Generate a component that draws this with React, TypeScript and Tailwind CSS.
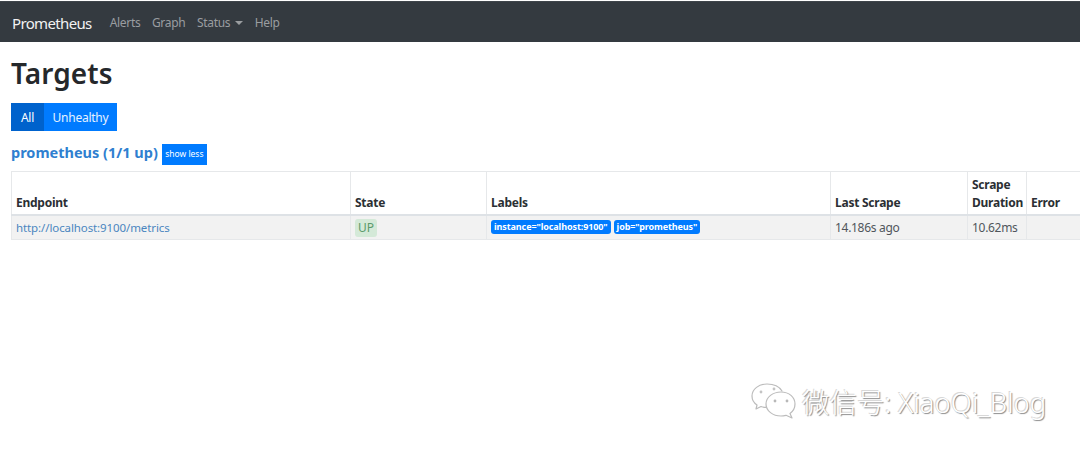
const th = "border border-[#e6e8ea] border-b-2 border-b-[#dee2e6] align-bottom text-left px-[4px] pb-[2px] font-bold text-[12px] tracking-[-0.25px] leading-[18px] text-[#2b2f33]";
const td = "border border-[#e6e8ea] align-middle px-[4px] text-[12px] tracking-[-0.3px] text-[#50565c]";

function Badge({ children }: { children: string }) {
  return (
    <span className="inline-block bg-[#007bff] rounded-[3px] px-[3px] text-white font-bold text-[9px] tracking-[-0.1px] leading-[14px] whitespace-nowrap">
      {children}
    </span>
  );
}

function WeChat() {
  return (
    <svg width="46" height="40" viewBox="0 0 46 40" fill="none" className="block">
      <g stroke="#bcbcbc" strokeWidth="1.2" strokeLinejoin="round" strokeLinecap="round">
        <path d="M31 8C28 3 22 1 16 1 8 1 1 6 1 13c0 4 2 7 5 9l-1 4 5-2.5c2 .6 3 .9 5 .9" fill="#fff" />
        <path d="M30 9c-8 0-15 5-15 12s7 12 15 12c2 0 3-.2 5-.7l6 2.7-2-4.500c3-2.200 5-5.500 5-9.500 0-7-6-12-14-12z" fill="#fff" />
      </g>
      <circle cx="10" cy="9" r="1.400" fill="#c4c4c4" />
      <circle cx="23" cy="6" r="1.400" fill="#c4c4c4" />
      <circle cx="24" cy="18" r="1.400" fill="#b8b8b8" />
      <circle cx="36" cy="18" r="1.400" fill="#b8b8b8" />
    </svg>
  );
}

export default function App() {
  return (
    <div className="relative w-[1080px] h-[453px] overflow-hidden bg-white font-['Noto_Sans','Open_Sans',sans-serif] text-[#212529]">
      <nav className="mt-px h-[41px] bg-[#343a40] border-t border-t-[#3f454b] flex items-center pl-[12px] pt-[2px]">
        <span className="text-[#f2f2f2] text-[15px] tracking-[-0.65px] mr-[18px]">Prometheus</span>
        <div className="flex items-center gap-[11.5px] text-[12px] tracking-[-0.3px] text-[#9a9da0]">
          <span>Alerts</span>
          <span>Graph</span>
          <span className="flex items-center gap-[5px]">
            Status
            <span className="w-0 h-0 border-x-[4px] border-x-transparent border-t-[4px] border-t-[#9a9da0]" />
          </span>
          <span>Help</span>
        </div>
      </nav>

      <main className="pl-[11px]">
        <h1 className="mt-[10px] text-[28px] leading-[42px] font-semibold tracking-[0.1px] text-[#25282b]">Targets</h1>
        <div className="mt-[9px] flex w-fit h-[28px] text-[12px] tracking-[-0.25px] text-white">
          <span className="w-[33px] bg-[#0062cc] flex items-center justify-center pt-[2px]">All</span>
          <span className="w-[73px] bg-[#007bff] flex items-center justify-center pt-[2px] text-[#e6f2ff]">Unhealthy</span>
        </div>
        <div className="mt-[13px] h-[21px] flex items-center gap-[4px]">
          <span className="text-[#2f7fd0] font-bold text-[14.5px] mb-[3px]">prometheus (1/1 up)</span>
          <span className="w-[45px] h-[21px] bg-[#007bff] text-white text-[8.5px] flex items-center justify-center">show less</span>
        </div>
        <table className="mt-[6px] table-fixed border-collapse w-[1100px]">
          <colgroup>
            <col className="w-[339px]" />
            <col className="w-[136px]" />
            <col className="w-[344px]" />
            <col className="w-[137px]" />
            <col className="w-[59px]" />
            <col className="w-[85px]" />
          </colgroup>
          <thead>
            <tr className="h-[43px]">
              <th className={th}>Endpoint</th>
              <th className={th}>State</th>
              <th className={th}>Labels</th>
              <th className={th}>Last Scrape</th>
              <th className={th}>Scrape Duration</th>
              <th className={th}>Error</th>
            </tr>
          </thead>
          <tbody>
            <tr className="h-[25px] bg-[#f2f2f2]">
              <td className={td}><span className="text-[#4a86c0] text-[11.5px] tracking-[-0.1px] relative top-px">http://localhost:9100/metrics</span></td>
              <td className={td}>
                <span className="inline-block bg-[#d4e9d8] rounded-[3px] px-[3px] text-[#5b9a6b] tracking-normal leading-[18px] relative top-px">UP</span>
              </td>
              <td className={td}>
                <span className="flex items-center gap-[3px] tracking-normal">
                  <Badge>instance="localhost:9100"</Badge>
                  <Badge>job="prometheus"</Badge>
                </span>
              </td>
              <td className={td}><span className="relative top-px">14.186s ago</span></td>
              <td className={td}><span className="relative top-px">10.62ms</span></td>
              <td className={td}></td>
            </tr>
          </tbody>
        </table>
      </main>

      <div className="absolute left-[751px] top-[383px] flex items-center gap-[5px]">
        <WeChat />
        <span className="text-white text-[27.5px] leading-[40px] whitespace-nowrap font-['Noto_Sans','Noto_Sans_CJK_SC',sans-serif] font-light [text-shadow:1px_1px_1px_#8a8a8a,-1px_-1px_0_#d8d8d8]">
          微信号: XiaoQi_Blog
        </span>
      </div>
    </div>
  );
}
